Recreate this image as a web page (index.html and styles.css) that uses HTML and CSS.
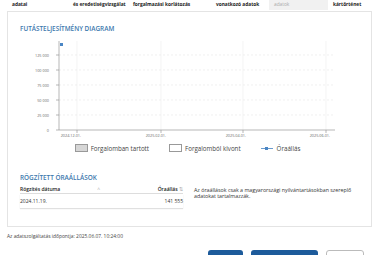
FILE: index.html
```html
<!DOCTYPE html>
<html lang="hu">
<head>
    <meta charset="UTF-8">
    <meta name="viewport" content="width=device-width, initial-scale=1.0">
    <title>Futásteljesítmény</title>
    <link rel="stylesheet" href="styles.css">
</head>
<body>
    <div class="tabs">
        <div class="tab">adatai</div>
        <div class="tab">és eredetiségvizsgálat</div>
        <div class="tab">forgalmazási korlátozás</div>
        <div class="tab">vonatkozó adatok</div>
        <div class="tab tab-active">adatok</div>
        <div class="tab">kártörténet</div>
    </div>

    <div class="card">
        <h2 class="section-title">Futásteljesítmény diagram</h2>

        <svg class="chart" width="340" height="103" viewBox="0 0 340 103">
            <g class="grid-h">
                <line x1="39" y1="17" x2="315" y2="17"/>
                <line x1="39" y1="32" x2="315" y2="32"/>
                <line x1="39" y1="47" x2="315" y2="47"/>
                <line x1="39" y1="62" x2="315" y2="62"/>
                <line x1="39" y1="77" x2="315" y2="77"/>
            </g>
            <g class="grid-v">
                <line x1="57" y1="3" x2="57" y2="92"/>
                <line x1="141" y1="3" x2="141" y2="92"/>
                <line x1="223" y1="3" x2="223" y2="92"/>
                <line x1="306" y1="3" x2="306" y2="92"/>
            </g>
            <g class="axis">
                <line x1="39" y1="3" x2="39" y2="92"/>
                <line x1="39" y1="92" x2="315" y2="92"/>
                <line x1="36" y1="17" x2="39" y2="17"/>
                <line x1="36" y1="32" x2="39" y2="32"/>
                <line x1="36" y1="47" x2="39" y2="47"/>
                <line x1="36" y1="62" x2="39" y2="62"/>
                <line x1="36" y1="77" x2="39" y2="77"/>
                <line x1="36" y1="92" x2="39" y2="92"/>
                <line x1="57" y1="92" x2="57" y2="95"/>
                <line x1="141" y1="92" x2="141" y2="95"/>
                <line x1="223" y1="92" x2="223" y2="95"/>
                <line x1="306" y1="92" x2="306" y2="95"/>
            </g>
            <g class="y-labels">
                <text x="29" y="18.5">125 000</text>
                <text x="29" y="33.5">100 000</text>
                <text x="29" y="48.5">75 000</text>
                <text x="29" y="63.5">50 000</text>
                <text x="29" y="78.5">25 000</text>
                <text x="29" y="93.5">0</text>
            </g>
            <g class="x-labels">
                <text x="61" y="99">2024.12.01.</text>
                <text x="146" y="99">2025.02.01.</text>
                <text x="226" y="99">2025.04.01.</text>
                <text x="310" y="99">2025.06.01.</text>
            </g>
            <rect class="point" x="40" y="5" width="3" height="3"/>
        </svg>

        <div class="legend">
            <div class="legend-item"><span class="swatch swatch-gray"></span>Forgalomban tartott</div>
            <div class="legend-item"><span class="swatch"></span>Forgalomból kivont</div>
            <div class="legend-item"><span class="line-mark"><span class="line-dot"></span></span>Óraállás</div>
        </div>

        <h2 class="section-title section-title-2">Rögzített óraállások</h2>

        <div class="readings">
            <div class="table">
                <div class="table-row table-head">
                    <div class="cell">Rögzítés dátuma <span class="sort">^</span></div>
                    <div class="cell cell-right">Óraállás <span class="sort">⇅</span></div>
                </div>
                <div class="table-row">
                    <div class="cell">2024.11.19.</div>
                    <div class="cell cell-right">141 555</div>
                </div>
            </div>
            <p class="note">Az óraállások csak a magyarországi nyilvántartásokban szereplő adatokat tartalmazzák.</p>
        </div>
    </div>

    <p class="timestamp">Az adatszolgáltatás időpontja: 2025.06.07. 10:24:00</p>

    <div class="actions">
        <button class="btn btn-blue btn-small"></button>
        <button class="btn btn-blue btn-wide"></button>
        <button class="btn btn-outline"></button>
    </div>
</body>
</html>
```

FILE: styles.css
```css
body { font-family: "Open Sans", "Liberation Sans", sans-serif; margin: 0; padding: 0; background: #fff; color: #333; font-size: 5px; overflow: hidden; }

.tabs {
    display: grid;
    grid-template-columns: 61px 60px 83px 58px 59px auto;
    margin-left: 7px;
    height: 10px;
    font-size: 4.8px;
    font-weight: 700;
    color: #222;
}
.tab { padding: 1px 5px 0; line-height: 7px; white-space: nowrap; overflow: hidden; }
.tab-active { background: #f1f1f1; color: #aaa; font-weight: 400; }

.card {
    margin: 1px 10px 0 7px;
    border: 1px solid #e4e4e4;
    padding: 0 12px 18px;
}

.section-title {
    margin: 13px 0 0;
    font-size: 6.4px;
    line-height: 8px;
    font-weight: 600;
    color: #3b78ad;
    text-transform: uppercase;
}
.section-title-2 { margin-top: 22px; }

.chart { display: block; margin-top: 5px; }
.grid-h line { stroke: #e6e6e6; stroke-width: 0.6; stroke-dasharray: 2 2; }
.grid-v line { stroke: #ececec; stroke-width: 0.6; }
.axis line { stroke: #999; stroke-width: 0.7; }
.y-labels text { font-size: 3.8px; fill: #666; text-anchor: end; }
.x-labels text { font-size: 3.8px; fill: #666; text-anchor: end; }
.point { fill: #4a86c5; }

.legend {
    display: flex;
    justify-content: center;
    gap: 20px;
    margin: 3px 0 0 -4px;
    height: 8px;
    align-items: center;
    font-size: 6.2px;
    color: #444;
}
.legend-item { display: flex; align-items: center; }
.swatch { width: 11px; height: 6px; border: 0.7px solid #999; background: #fff; margin-right: 3px; }
.swatch-gray { background: #d6d6d6; }
.line-mark { position: relative; width: 12px; height: 1px; background: #6b9bcd; margin-right: 4px; }
.line-dot { position: absolute; left: 4.5px; top: -1px; width: 3px; height: 3px; background: #4a86c5; }

.readings { display: flex; margin-top: 2px; }
.table { width: 164px; }
.table-row {
    display: flex;
    justify-content: space-between;
    align-items: center;
    height: 14px;
    box-shadow: 0 1px 1px #e0e0e0;
}
.table-head { height: 9px; font-weight: 600; color: #222; box-shadow: none; border-bottom: 0.7px solid #ddd; }
.cell { white-space: nowrap; }
.table-head .cell:first-child { width: 80px; display: flex; justify-content: space-between; }
.cell-right { text-align: right; }
.sort { color: #aaa; font-weight: 400; }
.note { margin: 3px 0 0 11px; width: 166px; line-height: 6px; font-size: 5.3px; color: #333; }

.timestamp { margin: 5px 0 0 7px; line-height: 8px; font-size: 4.9px; color: #444; }

.actions { display: flex; justify-content: flex-end; gap: 8px; margin: 10px 18px 0 0; }
.btn { height: 14px; border-radius: 3px; border: none; padding: 0; }
.btn-blue { background: #1d5b9b; }
.btn-small { width: 35px; }
.btn-wide { width: 67px; }
.btn-outline { width: 38px; background: #fff; border: 0.7px solid #bbb; }
```
